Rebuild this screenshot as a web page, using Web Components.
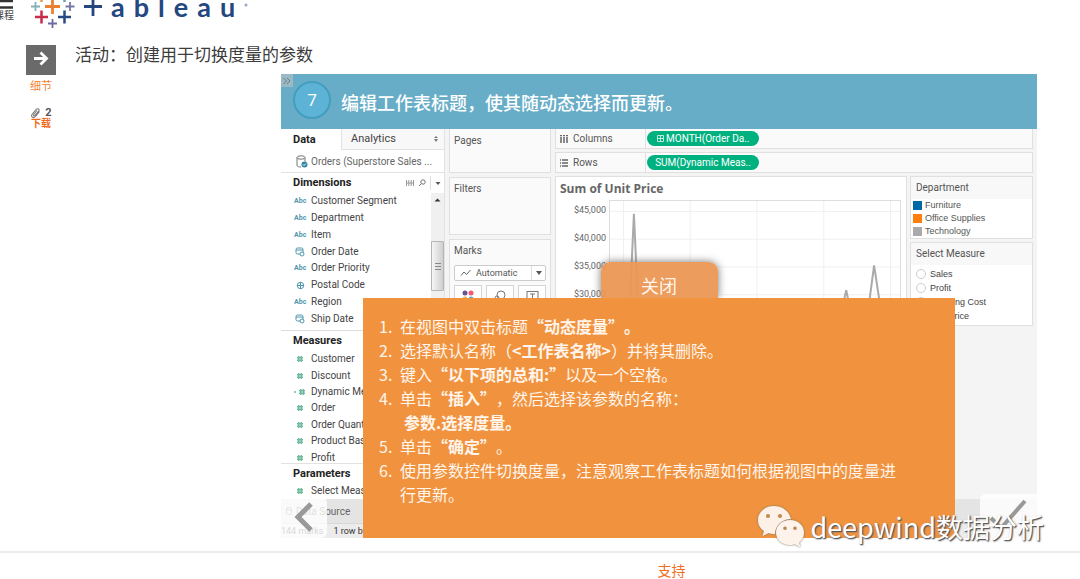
<!DOCTYPE html>
<html lang="zh-CN">
<head>
<meta charset="utf-8">
<title>创建用于切换度量的参数</title>
<style>
body{margin:0;background:#fff;color:#3c3c3c;font-family:Roboto,"Noto Sans CJK SC",sans-serif;text-spacing-trim:space-all;overflow:hidden}
</style>
</head>
<body>
<lesson-page></lesson-page>
<script>
const define = (name, css, html) => customElements.define(name, class extends HTMLElement {
  constructor() {
    super();
    const t = document.createElement('template');
    t.innerHTML = `<style>*{box-sizing:border-box}:host{display:block;box-sizing:border-box}${css}</style>${html}`;
    this.attachShadow({mode: 'open'}).append(t.content.cloneNode(true));
  }
});

define('site-header', `
:host{height:30px;overflow:hidden}
header{display:flex;align-items:flex-start}
button{all:unset;display:block;width:20px;margin-left:-6px;font-size:10px;line-height:10px;color:#444;white-space:nowrap}
button svg{display:block;margin-left:6px}
a{display:flex;align-items:flex-start;color:#24477f;text-decoration:none;margin-left:16px;gap:8px}
.word{display:flex;gap:9px;font:700 27px/32px Lato,sans-serif;margin-top:-9px}
.word svg{margin-top:9px}
`, `<header>
<button aria-label="课程"><svg width="14" height="11" viewBox="0 0 14 11"><path d="M0 1h13M0 7.500h13" stroke="#333" stroke-width="2.600"/></svg>课程</button>
<a href="#" aria-label="tableau"><svg width="46" height="30" viewBox="30 0 46 30" fill="none">
<path d="M45 6.500h15M52.500 0v14" stroke="#eb8030" stroke-width="2.800"/>
<path d="M31 6.500h9M35.500 2v9" stroke="#86b0b5" stroke-width="1.800"/>
<path d="M65.500 6.500h9M70 2v9" stroke="#7777a5" stroke-width="1.800"/>
<path d="M35 17h13M41.500 10.500v13" stroke="#c72c48" stroke-width="2.500"/>
<path d="M58 17h13M64.500 10.500v13" stroke="#254c82" stroke-width="2.500"/>
<path d="M48 23.500h9M52.500 19v9" stroke="#6b6b9d" stroke-width="1.800"/>
<path d="M41.500 0v2" stroke="#eb9a45" stroke-width="2.500"/><path d="M64.500 0v2" stroke="#6da0a7" stroke-width="2.500"/></svg>
<span class="word"><svg width="18" height="18" viewBox="0 0 18 18"><path d="M0 6.500h18M9 0v16" stroke="#24477f" stroke-width="2.800"/></svg><span>a</span><span>b</span><span>l</span><span>e</span><span>a</span><span>u</span><svg width="4" height="18" viewBox="6 0 4 18"><circle cx="8" cy="5" r="1.500" fill="#93a9c8"/></svg></span></a>
</header>`);

define('side-rail', `
:host{width:75px;padding:15px 19px 0 26px}
nav{display:grid;justify-items:center}
a{color:#f58233;text-decoration:none;text-align:center;font-size:11px;line-height:14px;width:30px}
.go{background:#6a6a6a;display:block;height:30px;margin-bottom:5px}
.go svg{display:block}
.dl{font-weight:700;font-size:10px;line-height:10px;margin-top:13px;color:#f26a1c}
.dl span{display:flex;gap:4px;color:#555;font-size:11px;line-height:12px;justify-content:center;align-items:center}
`, `<nav><a href="#"><span class="go"><svg width="30" height="30" viewBox="0 0 30 30" fill="none" stroke="#fff" stroke-width="2.800"><path d="M8 13.500h12M14.500 7.500l6 6-6 6"/></svg></span>细节</a>
<a class="dl" href="#"><span><svg width="11" height="12" viewBox="0 0 11 12" fill="none" stroke="#777" stroke-width="1.100"><path d="M9.500 4.500 5.500 9.500c-2 2.200-5 .3-3.500-2L6 2.500c1.500-1.700 4-.2 2.700 1.700L5 8.500c-.8.9-2 0-1.300-1L7 3.500"/></svg>2</span>下载</a></nav>`);

customElements.define('field-item', class extends HTMLElement {
  constructor() {
    super();
    const icons = {
      abc: '<b>Abc</b>',
      date: '<svg width="10" height="10" viewBox="0 0 10 10" fill="none" stroke="#4f96ac"><rect x="1" y="1" width="7" height="6" rx="1.500"/><path d="M1 3h7"/><circle cx="7" cy="7" r="2" fill="#fff"/></svg>',
      globe: '<svg width="9" height="9" viewBox="0 0 9 9" fill="none" stroke="#4f96ac"><circle cx="4.500" cy="4.500" r="3.200"/><path d="M1 4.500h7M4.500 1v7"/></svg>',
      num: '<svg width="8" height="8" viewBox="0 0 8 8" stroke="#6dbb9b" stroke-width="1.500"><path d="M2.700 1v6M5.300 1v6M1 2.700h6M1 5.300h6"/></svg>',
      calc: '<svg class="calc" width="12" height="8" viewBox="0 0 12 8" stroke="#6dbb9b" stroke-width="1.500"><path d="M0 4h2M6.700 1v6M9.300 1v6M5 2.700h6M5 5.300h6"/></svg>'
    };
    this.attachShadow({mode: 'open'}).innerHTML = `<style>
:host{display:grid;grid-template-columns:12px 1fr;column-gap:5px;align-items:center;padding-left:13px;white-space:nowrap;font-size:10px;line-height:14px;color:#444}
i{display:grid;place-items:center;font-style:normal}b{font-size:7px;line-height:10px;color:#4f96ac}.calc{margin-right:4px}
</style><i>${icons[this.getAttribute('kind')]}</i><span><slot></slot></span>`;
  }
});

define('data-pane', `
:host{background:#fff;border-right:1px solid #e2e2e2;font-size:11px;color:#444}
.tabs{display:grid;grid-template-columns:60px 1fr;height:21px}
button{all:unset;box-sizing:border-box;padding-left:12px;line-height:20px}
button.on{font-weight:700;color:#222}
button.off{background:#f8f8f8;border:solid #e2e2e2;border-width:0 0 1px 1px;padding:0 6px 0 9px;display:flex;justify-content:space-between;align-items:center}
.src{display:flex;align-items:center;gap:3px;height:23px;padding-left:15px;color:#666;font-size:10px;border-bottom:1px solid #e2e2e2;white-space:nowrap}
h3{margin:0;font-size:11px;line-height:20px;color:#222;padding:0 0 0 12px;display:flex;align-items:center}
h3 svg{margin-left:auto}
.scroll{display:grid;grid-template-columns:1fr 13px;border-bottom:1px solid #ddd;height:138px}
.rows{display:grid;grid-auto-rows:1fr}
.dim{height:134px}.mea{height:115px;margin-bottom:-3px}
.bar{background:#f0f0f0;display:grid;grid-template-rows:14px 34px 50px;align-content:start;justify-items:center}
.thumb{width:100%;border:1px solid #b5b5b5;border-radius:1px;align-self:stretch;background:linear-gradient(90deg,#f5f5f5,#cfcfcf);grid-row:3;display:grid;place-items:center}
.par{border-top:1px solid #e2e2e2;height:36px}
`, `<div class="tabs" role="tablist"><button class="on" role="tab">Data</button><button class="off" role="tab">Analytics<svg width="4" height="6" viewBox="0 0 4 6"><path d="M2 0l2 2H0zM2 6l2-3H0z" fill="#777"/></svg></button></div>
<div class="src"><svg width="12" height="13" viewBox="0 0 12 13" fill="none" stroke="#777"><ellipse cx="5" cy="2.500" rx="4" ry="1.700"/><path d="M1 2.500v8c0 1 2 1.500 4 1.500M9 2.500v4"/><circle cx="8.500" cy="9.500" r="3" fill="#2f86a6" stroke="none"/><path d="M7 9.500l1 1 2-2" stroke="#fff"/></svg>Orders (Superstore Sales ...</div>
<h3>Dimensions<svg width="38" height="14" viewBox="0 0 38 14" fill="none" stroke="#777"><path d="M.5 4v6M2.800 4v6M5.200 4v6M7.500 4v6M0 7h8" stroke="#999"/><circle cx="17" cy="6" r="2.200"/><path d="M15.500 7.500 13 10"/><path d="M24.500 0v14" stroke="#ddd"/><path d="M29.500 6h5L32 9z" fill="#555" stroke="none"/></svg></h3>
<div class="scroll"><div class="rows dim"><field-item kind="abc">Customer Segment</field-item><field-item kind="abc">Department</field-item><field-item kind="abc">Item</field-item><field-item kind="date">Order Date</field-item><field-item kind="abc">Order Priority</field-item><field-item kind="globe">Postal Code</field-item><field-item kind="abc">Region</field-item><field-item kind="date">Ship Date</field-item></div>
<div class="bar"><svg width="13" height="14" viewBox="0 0 13 14"><path d="M3.500 8.500h6l-3-3z" fill="#333"/></svg><div class="thumb"><svg width="6" height="7" viewBox="0 0 6 7"><path d="M0 .5h6M0 3.500h6M0 6.500h6" stroke="#888"/></svg></div></div></div>
<h3>Measures</h3>
<div class="rows mea"><field-item kind="num">Customer</field-item><field-item kind="num">Discount</field-item><field-item kind="calc">Dynamic Measure</field-item><field-item kind="num">Order</field-item><field-item kind="num">Order Quantity</field-item><field-item kind="num">Product Base Margin</field-item><field-item kind="num">Profit</field-item></div>
<div class="par"><h3>Parameters</h3><field-item kind="num">Select Measure</field-item></div>`);

define('card-column', `
:host{display:grid;grid-template-rows:44px 58px 1fr;gap:4px;font-size:10px;line-height:14px;color:#555}
section{background:#fafafa;border:1px solid #e0e0e0;padding:4px}
section.first{border-top:0;padding-top:5px}
label{display:block}
.pick{display:grid;grid-template-columns:16px 1fr 14px;align-items:center;border:1px solid #ccc;border-radius:2px;background:#fff;height:16px;margin:7px 0 4px;padding-left:5px}
select{all:unset;font-size:9px;line-height:14px;color:#555}
.tri{border-left:1px solid #ddd;height:14px}
.btns{display:grid;grid-template-columns:repeat(3,1fr);gap:4px}
button{all:unset;border:1px solid #d5d5d5;background:#fff;height:26px;display:grid;place-items:start center;padding-top:4px;box-sizing:border-box}
`, `<section class="first">Pages</section><section>Filters</section>
<section><label for="mark">Marks</label>
<div class="pick"><svg width="12" height="8" viewBox="0 0 12 8"><path d="M1 6.500 4 3l2.500 2.500L10.500 1" fill="none" stroke="#666"/></svg><select id="mark"><option>Automatic</option></select><svg class="tri" viewBox="0 0 14 14"><path d="M4 5h6l-3 4z" fill="#555"/></svg></div>
<div class="btns"><button aria-label="Color"><svg width="12" height="12"><circle cx="3" cy="3" r="2.500" fill="#6a5295"/><circle cx="9" cy="3" r="2.500" fill="#f05a72"/><circle cx="3" cy="9" r="2.500" fill="#eeb04d"/><circle cx="9" cy="9" r="2.500" fill="#5aa5c0"/></svg></button><button aria-label="Size"><svg width="14" height="12" fill="none" stroke="#777"><circle cx="8" cy="5" r="4"/><circle cx="4" cy="8" r="2"/></svg></button><button aria-label="Label"><svg width="13" height="12" fill="none" stroke="#777"><rect x="1" y="1.500" width="11" height="9"/><path d="M4 4h5M6.500 4v5"/></svg></button></div></section>`);

define('shelf-row', `
:host{display:grid;grid-template-columns:90px 1fr;background:#fafafa;border:1px solid #e0e0e0;font-size:10px;color:#555;align-items:stretch}
.name{display:flex;align-items:center;gap:5px;padding-left:4px;border-right:1px solid #e0e0e0}
.pill{display:flex;align-items:center;padding-left:1px}
.pill ::slotted(button){all:unset;background:#00b180;color:#fff;border-radius:8px;width:112px;height:15px;font-size:10px;line-height:15px;text-align:center;white-space:nowrap}
`, `<div class="name"><slot name="icon"></slot><slot></slot></div><div class="pill"><slot name="pill"></slot></div>`);

define('price-view', `
:host{background:#fff;border:1px solid #e0e0e0;padding:3px 5px 0 4px}
h2{margin:0;font:700 12px/18px "Open Sans",sans-serif;color:#666}
.chart{display:grid;grid-template-columns:46px 1fr;gap:3px;height:124px;margin-top:2px;overflow:hidden}
.axis{font-size:9px;line-height:28px;color:#666;text-align:right;margin-top:-4px}
.axis div{height:28px}
.plot{width:100%;height:124px;display:block;border:1px solid #ddd;border-bottom:0}
`, `<h2>Sum of Unit Price</h2><div class="chart"><div class="axis"><div>$45,000</div><div>$40,000</div><div>$35,000</div><div>$30,000</div></div>
<svg class="plot" viewBox="0 0 291 124" preserveAspectRatio="none"><path d="M0 10.500h291M0 38.500h291M0 66.500h291M0 94.500h291M13.500 0v124M80.500 0v124M147.500 0v124M214.500 0v124M281.500 0v124" stroke="#f0f0f0"/><path d="M19 124 24 13 29 124M222 124 231 118 237 90 243 118 258 118 265 65 273 118 290 124" fill="none" stroke="#aaa" stroke-width="2"/></svg></div>`);

define('legend-column', `
:host{display:grid;grid-template-rows:63px 84px;gap:3px;color:#555}
section,fieldset{margin:0;padding:0;min-width:0;border:1px solid #e0e0e0;background:#fff;font:9px/13px "Liberation Sans",sans-serif}
h3{margin:0;background:#f8f8f8;font:400 10px/22px Roboto,sans-serif;padding-left:5px}
ul{list-style:none;margin:0;padding:0 2px}
li{display:flex;align-items:center;gap:3px;height:13px}
li i{width:9px;height:9px}
label{display:flex;align-items:center;gap:4px;height:14px;padding-left:5px;color:#444}
.opts{padding-top:2px}
input{appearance:none;margin:0;width:10px;height:10px;border:1px solid #ccc;border-radius:50%}
`, `<section><h3>Department</h3><ul><li><i style="background:#0068a5"></i>Furniture</li><li><i style="background:#ff7f0e"></i>Office Supplies</li><li><i style="background:#aaa"></i>Technology</li></ul></section>
<fieldset aria-label="Select Measure"><h3>Select Measure</h3><div class="opts"><label><input type="radio" name="m">Sales</label><label><input type="radio" name="m">Profit</label><label><input type="radio" name="m">Shipping Cost</label><label><input type="radio" name="m">Unit Price</label></div></fieldset>`);

define('step-popup', `
:host{position:absolute;left:82px;right:82px;top:188px;bottom:0;display:flex;flex-direction:column;align-items:center;font-family:"Noto Sans CJK SC",sans-serif;color:#fff5ec}
button{all:unset;width:117px;height:36px;border-radius:9px 9px 0 0;background:rgba(235,151,83,.95);box-shadow:0 0 8px #777;text-align:center;font-size:18px;line-height:46px;box-sizing:border-box;flex:none}
.body{align-self:stretch;flex:1;background:#f1933e;position:relative;padding:16px 46px 0 37px}
ol{margin:0;padding:0;list-style:none;counter-reset:n;font-size:16px;line-height:24px}
li{counter-increment:n;display:grid;grid-template-columns:21px 1fr;margin-left:-21px}
li::before{content:counter(n) "."}
b{font-weight:700}
.ind{margin-left:4px}
`, `<button>关闭</button><div class="body"><ol><li><span>在视图中双击标题<b>“动态度量”。</b></span></li><li><span>选择默认名称（<b>&lt;工作表名称&gt;</b>）并将其删除。</span></li><li><span>键入<b>“以下项的总和:”</b>以及一个空格。</span></li><li><span>单击<b>“插入”</b>，然后选择该参数的名称：<br><b class="ind">参数.选择度量。</b></span></li><li><span>单击<b>“确定”</b>。</span></li><li><span>使用参数控件切换度量，注意观察工作表标题如何根据视图中的度量进行更新。</span></li></ol></div>`);

define('lesson-stage', `
:host{position:relative;background:#f4f4f4}
.head{background:#68adc8;height:55px;display:flex;align-items:center;gap:10px;color:#fff;padding-left:12px;position:relative}
.head h2{margin:0;font:500 18px/26px "Noto Sans CJK SC",sans-serif}
.no{width:38px;height:38px;border-radius:50%;background:#5db3d5;border:2px solid #429dbf;text-align:center;font:17px/33px "Open Sans",sans-serif;flex:none;margin-top:-3px}
.fold{all:unset;position:absolute;left:0;top:0;width:12px;height:13px;background:#9bb9c4;display:grid;place-items:center}
.work{display:grid;grid-template-columns:164px 102px 1fr;column-gap:4px;padding-right:4px}
.right{display:grid;grid-template-columns:1fr 123px;grid-template-rows:20px 21px 1fr;gap:3px;align-content:start}
shelf-row{grid-column:1/-1}
shelf-row:first-child{border-top:0}
price-view{align-self:start}
.tabs{background:#e4e4e4;height:25px;border-bottom:1px solid #d8d8d8;display:flex;align-items:center;gap:4px;padding-left:5px;font-size:10px;color:#666}
.status{background:#ececec;height:14px;display:flex;gap:10px;font-size:9px;line-height:14px;color:#333}
.nav{all:unset;position:absolute;bottom:0;background:rgba(255,255,255,.8);display:grid;place-items:center}
.prev{left:0;width:46px;height:41px;border-radius:0 6px 6px 0}
.next{right:0;width:57px;height:44px;border-radius:6px 0 0 0}
`, `<div class="head"><button class="fold" aria-label="展开"><svg width="8" height="6" viewBox="0 0 8 6" fill="none" stroke="#667e88"><path d="M.5 0l3 3-3 3M4 0l3 3-3 3"/></svg></button><span class="no">7</span><h2>编辑工作表标题，使其随动态选择而更新。</h2></div>
<div class="work"><data-pane></data-pane><card-column></card-column><div class="right">
<shelf-row><svg slot="icon" width="8" height="8" viewBox="0 0 8 8"><path d="M1 2v6M4 2v6M7 2v6M0 .5h2M3 .5h2M6 .5h2" stroke="#666" stroke-width="1.500"/></svg>Columns<button slot="pill"><svg width="7" height="7" viewBox="0 0 7 7" fill="none" stroke="#bfeadd"><path d="M.5.5h6v6h-6zM1 3.500h5M3.500 1v5"/></svg> MONTH(Order Da..</button></shelf-row>
<shelf-row><svg slot="icon" width="8" height="8" viewBox="0 0 8 8"><path d="M2 1h6M2 4h6M2 7h6M0 1h1M0 4h1M0 7h1" stroke="#666" stroke-width="1.300"/></svg>Rows<button slot="pill">SUM(Dynamic Meas..</button></shelf-row>
<price-view></price-view><legend-column></legend-column></div></div>
<div class="tabs"><svg width="6" height="8" viewBox="0 0 6 8" fill="none" stroke="#777"><rect x=".5" y=".5" width="5" height="7" rx="2"/><path d="M1 3h4"/></svg>Data Source</div><div class="status"><span>144 marks</span><span>1 row by 1 column</span></div>
<button class="nav prev" aria-label="上一步"><svg width="20" height="32" viewBox="0 0 20 32"><path d="M17 2 4 15l13 13" fill="none" stroke="#999" stroke-width="5"/></svg></button>
<button class="nav next" aria-label="完成"><svg width="40" height="36" viewBox="0 0 40 36"><path d="M2 20l10 10L36 3" fill="none" stroke="#999" stroke-width="4"/></svg></button>
<step-popup></step-popup>`);

define('wechat-mark', `
:host{position:absolute;right:36px;bottom:2px;display:flex;align-items:center;gap:5px;color:#fff;font:27px/42px "Noto Sans CJK SC",sans-serif;text-shadow:1px 1px 1px #555,1px 1px 2px #777}
svg{filter:drop-shadow(0 0 1px #776)}
`, `<svg width="48" height="44" viewBox="0 0 48 44"><path fill="#fdf0e6" fill-rule="evenodd" d="M17 1C7.500 1 1 7.500 1 15c0 5 2.500 8.500 6 11L5.500 31l6-3c2 .7 4 1 6.500 1 0-8 6.500-15 16-15C32 6 25 1 17 1zM11 9a2 2 0 110 4 2 2 0 010-4zm12 0a2 2 0 110 4 2 2 0 010-4z"/><path fill="#fdf3eb" fill-rule="evenodd" d="M33 15c-8 0-14 5.500-14 12.500S25 40 33 40c2 0 3.500-.3 5-.8l5.500 3-1.500-4.700c3-2.300 5-5.500 5-10C47 20.500 41 15 33 15zm-5 6.500a1.800 1.800 0 110 3.600 1.800 1.800 0 010-3.600zm10 0a1.800 1.800 0 110 3.600 1.800 1.800 0 010-3.600z"/></svg><span>deepwind数据分析</span>`);

define('lesson-page', `
main{display:grid;grid-template-columns:75px 1fr;position:relative;padding-bottom:13px;border-bottom:2px solid #ececec}
h1{margin:12px 0 8px;font:400 17px/24px "Noto Sans CJK SC",sans-serif;color:#3c3c3c}
lesson-stage{margin:0 43px 0 206px}
footer{padding:10px 0 0 263px;text-align:center;font-size:14px;line-height:16px}
a{color:#f26f21;text-decoration:none}
`, `<site-header></site-header><main><side-rail></side-rail><article><h1>活动：创建用于切换度量的参数</h1><lesson-stage></lesson-stage></article><wechat-mark></wechat-mark></main><footer><a href="#">支持</a></footer>`);
</script>
</body>
</html>
